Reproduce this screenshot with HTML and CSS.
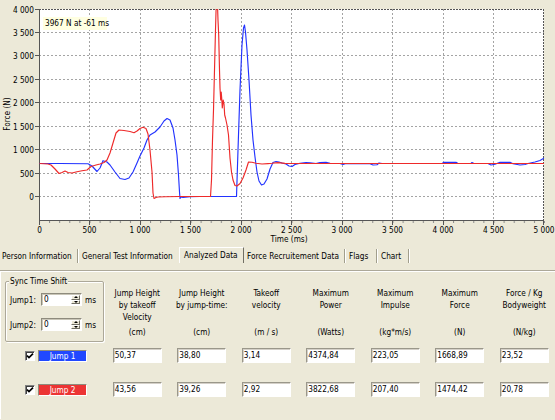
FILE: index.html
```html
<!DOCTYPE html>
<html>
<head>
<meta charset="utf-8">
<title>Jump analysis</title>
<link rel="stylesheet" href="styles.css">
</head>
<body>
<div class="app">
  <div class="chart">
    <svg class="chart-svg" width="555" height="246" viewBox="0 0 555 246">
      <defs>
        <clipPath id="plotclip"><rect x="39" y="9" width="505" height="211"/></clipPath>
        <pattern id="minor" x="39" y="0" width="10.1" height="246" patternUnits="userSpaceOnUse">
          <rect x="0" y="0" width="1" height="246" fill="#8a8a8a"/>
        </pattern>
      </defs>
      <rect class="plot-bg" x="39" y="9" width="505" height="211"/>
      <path class="grid" d="M89.5 9V220M140.5 9V220M190.5 9V220M241.5 9V220M291.5 9V220M342.5 9V220M392.5 9V220M443.5 9V220M493.5 9V220"/>
      <path class="grid" d="M39 32.5H544M39 55.5H544M39 79.5H544M39 102.5H544M39 126.5H544M39 149.5H544M39 173.5H544M39 196.5H544"/>
      <path class="frame" d="M39 9.5H544M543.5 9V220"/>
      <path class="axis" d="M39.5 9V221M39 220.5H544"/>
      <path class="axis" d="M35 9.5H39M35 32.5H39M35 55.5H39M35 79.5H39M35 102.5H39M35 126.5H39M35 149.5H39M35 173.5H39M35 196.5H39"/>
      <rect x="39" y="221" width="506" height="2" fill="url(#minor)"/>
      <path class="axis" d="M39.5 220V225M89.5 220V225M140.5 220V225M190.5 220V225M241.5 220V225M291.5 220V225M342.5 220V225M392.5 220V225M443.5 220V225M493.5 220V225M543.5 220V225"/>
      <g class="ylab">
        <text x="34" y="12.5">4 000</text>
        <text x="34" y="35.5">3 500</text>
        <text x="34" y="58.5">3 000</text>
        <text x="34" y="82.5">2 500</text>
        <text x="34" y="105.5">2 000</text>
        <text x="34" y="129.5">1 500</text>
        <text x="34" y="152.5">1 000</text>
        <text x="34" y="176.5">500</text>
        <text x="34" y="199.5">0</text>
      </g>
      <g class="xlab">
        <text x="39.5" y="232.5">0</text>
        <text x="89.5" y="232.5">500</text>
        <text x="140" y="232.5">1 000</text>
        <text x="190.5" y="232.5">1 500</text>
        <text x="241" y="232.5">2 000</text>
        <text x="291.5" y="232.5">2 500</text>
        <text x="342" y="232.5">3 000</text>
        <text x="392.5" y="232.5">3 500</text>
        <text x="443" y="232.5">4 000</text>
        <text x="493.5" y="232.5">4 500</text>
        <text x="544" y="232.5">5 000</text>
      </g>
      <text class="title-x" x="289" y="241.5">Time (ms)</text>
      <text class="title-y" transform="translate(10 114) rotate(-90)">Force (N)</text>
      <g clip-path="url(#plotclip)">
        <path class="blue" d="M39.5 163.5L60 163.5L88 163.8L92 166L97 171.5L100 168L103 160.7L107 162L110 165L115 172L120 178.5L125 179.5L129 178L133 172L137 163L140 156L144 148L147 140L150 135L155 132L160 127L164 121L167 118.5L170 120L173 128L175 140L177 155L178.5 175L179.5 192L180 198.5L181 197L183 197.5L190 196.8L200 196.5L236.5 196.5L238 150L240 90L242 45L243.5 28L244.5 25L245.5 32L247 50L249 80L251 115L253 140L255 157L257 172L259 181L261.5 185L264 184L267 179L270 169L273 162.5L276 161.5L279 162L282 163L286 164L289 166L292 166.5L295 164.5L300 163.3L306 162.5L310 162.7L316 163.5L320 162.6L326 162.3L330 163.4L340 163.5L343 164.5L346 163.5L370 163.7L373 165L377 164.8L379 163L382 163.5L442 163.5L444 162.3L456 162.3L458 163.5L471 163.5L472 162.5L474 163.5L488 163.5L491 165L495 164.2L500 162.3L510 162.3L513 163.7L520 165L525 164.5L528 163.5L535 162L540 160.5L545 157.5"/>
        <path class="red" d="M39.5 163.5L48 164L51 165L55 169L59 173.5L62 172.5L65 171L68 172.5L72 173L77 171.8L82 170.8L87 170L91 166.5L96 165L100 164L104 162.5L107 160L110 153L113 143L116 133L119 130L124 130.5L130 131.5L134 132.7L137 131L140 128.5L143 127.3L146 128.5L148 134L150 150L152 172L153 193L154 198.5L156 197.5L158 197L165 196.8L180 196.5L210.5 196.5L211.5 180L212.5 140L213.5 110L214.5 70L215.5 30L216.2 5L217.5 5L218 20L218.7 35L219.5 70L220 88L220.7 100L221.2 92L221.7 98L222.3 108L223.2 100L224 104L224.7 115L225.5 118L227 125L228.5 135L230 158L231.5 172L233 180L235 185.5L237 186L240 183.5L243 178L246 170L248.5 162L252 162.2L256 163.3L262 164L268 163.6L272 163.3L278 162.6L285 163.4L545 163.5"/>
      </g>
    </svg>
    <div class="tooltip">3967 N at -61 ms</div>
  </div>

  <div class="tabs">
    <div class="tab tab-first">Person Information</div>
    <div class="tab tab-general">General Test Information</div>
    <div class="tab tab-active">Analyzed Data</div>
    <div class="tab tab-force">Force Recruitement Data</div>
    <div class="tab tab-small">Flags</div>
    <div class="tab tab-small">Chart</div>
  </div>

  <div class="panel">
    <div class="group">
      <div class="legend">Sync Time Shift</div>
      <div class="spinrow">
        <span class="spinlabel">Jump1:</span>
        <div class="spin"><span class="spin-val">0</span><span class="spin-btns"><span class="spin-btn up"></span><span class="spin-btn down"></span></span></div>
        <span class="ms">ms</span>
      </div>
      <div class="spinrow second">
        <span class="spinlabel">Jump2:</span>
        <div class="spin"><span class="spin-val">0</span><span class="spin-btns"><span class="spin-btn up"></span><span class="spin-btn down"></span></span></div>
        <span class="ms">ms</span>
      </div>
    </div>

    <div class="head">Jump Height<br>by takeoff<br>Velocity</div>
    <div class="head">Jump Height<br>by jump-time:</div>
    <div class="head">Takeoff<br>velocity</div>
    <div class="head">Maximum<br>Power</div>
    <div class="head">Maximum<br>Impulse</div>
    <div class="head">Maximum<br>Force</div>
    <div class="head">Force / Kg<br>Bodyweight</div>

    <div class="unit">(cm)</div>
    <div class="unit">(cm)</div>
    <div class="unit">(m / s)</div>
    <div class="unit">(Watts)</div>
    <div class="unit">(kg*m/s)</div>
    <div class="unit">(N)</div>
    <div class="unit">(N/kg)</div>

    <div class="rowlabel">
      <span class="check"><svg width="8" height="8" viewBox="0 0 8 8"><polyline points="1,3.6 3,5.6 7,1.6" /></svg></span>
      <span class="jlabel jump1">Jump 1</span>
    </div>
    <div class="field">50,37</div>
    <div class="field">38,80</div>
    <div class="field">3,14</div>
    <div class="field">4374,84</div>
    <div class="field">223,05</div>
    <div class="field">1668,89</div>
    <div class="field">23,52</div>

    <div class="rowlabel">
      <span class="check"><svg width="8" height="8" viewBox="0 0 8 8"><polyline points="1,3.6 3,5.6 7,1.6" /></svg></span>
      <span class="jlabel jump2">Jump 2</span>
    </div>
    <div class="field">43,56</div>
    <div class="field">39,26</div>
    <div class="field">2,92</div>
    <div class="field">3822,68</div>
    <div class="field">207,40</div>
    <div class="field">1474,42</div>
    <div class="field">20,78</div>
  </div>
</div>
</body>
</html>
```

FILE: styles.css
```css
html, body {
  margin: 0;
  padding: 0;
}

body {
  width: 555px;
  height: 420px;
  overflow: hidden;
  background: #ece9d8;
  font-family: "DejaVu Sans Condensed", "Liberation Sans", Arial, sans-serif;
  font-size: 8.2px;
  color: #000;
}

.app {
  width: 555px;
  height: 420px;
}

/* ---------- chart ---------- */
.chart {
  position: relative;
  height: 246px;
}

.chart-svg {
  display: block;
}

.plot-bg {
  fill: #ffffff;
}

.grid {
  fill: none;
  stroke: #a4a4a4;
  stroke-width: 1;
  stroke-dasharray: 2 2;
}

.frame {
  fill: none;
  stroke: #555555;
  stroke-width: 1;
  stroke-dasharray: 2 1;
}

.axis {
  fill: none;
  stroke: #555555;
  stroke-width: 1;
}

.ylab text,
.xlab text,
.title-x,
.title-y {
  font-family: "DejaVu Sans Condensed", "Liberation Sans", Arial, sans-serif;
  font-size: 8.2px;
  fill: #000;
}

.ylab text {
  text-anchor: end;
}

.xlab text,
.title-x,
.title-y {
  text-anchor: middle;
}

.blue {
  fill: none;
  stroke: #2233ff;
  stroke-width: 1.15;
  stroke-linejoin: round;
}

.red {
  fill: none;
  stroke: #ee2a2a;
  stroke-width: 1.15;
  stroke-linejoin: round;
}

.tooltip {
  position: absolute;
  left: 43px;
  top: 17px;
  width: 64px;
  height: 13px;
  box-sizing: border-box;
  padding-left: 2px;
  line-height: 13px;
  background: #ffffe1;
  white-space: nowrap;
}

/* ---------- tabs ---------- */
.tabs {
  display: flex;
  align-items: flex-end;
  height: 17px;
}

.tab {
  box-sizing: border-box;
  height: 14px;
  line-height: 14px;
  padding-left: 3px;
  border-right: 1px solid #a19e8c;
  margin-right: 1px;
  box-shadow: 1px 0 0 #ffffff;
  white-space: nowrap;
  overflow: hidden;
}

.tab-first {
  width: 78px;
  padding-left: 2px;
}

.tab-general {
  width: 100px;
  border-right: 0;
  margin-right: 0;
  box-shadow: none;
}

.tab-active {
  width: 65px;
  height: 16px;
  padding-left: 4px;
  border-top: 1px solid #ffffff;
  border-left: 1px solid #ffffff;
  border-right: 1px solid #716f64;
  margin-right: 0;
  box-shadow: none;
}

.tab-force {
  width: 101px;
}

.tab-small {
  width: 31px;
}

/* ---------- analysis panel ---------- */
.panel {
  margin-top: 7px;
  border-top: 1px solid #aca899;
  box-shadow: inset 0 1px 0 #ffffff, inset 1px 0 0 #ffffff;
  padding-top: 10px;
  height: 149px;
  box-sizing: border-box;
  display: grid;
  grid-template-columns: 105px repeat(7, 64.5px);
  grid-template-rows: 45px 12px 34px 34px;
}

.group {
  grid-column: 1;
  grid-row: 1 / 3;
  margin-left: 5px;
  width: 99px;
  height: 61px;
  box-sizing: border-box;
  border: 1px solid #aca899;
  border-radius: 2px;
  box-shadow: inset 1px 1px 0 #ffffff, 1px 1px 0 #ffffff;
  padding-left: 4px;
  display: flex;
  flex-direction: column;
  align-items: flex-start;
}

.legend {
  margin-top: -6px;
  margin-left: -1px;
  padding: 0 1px;
  line-height: 11px;
  background: #ece9d8;
}

.spinrow {
  display: flex;
  align-items: center;
  height: 13px;
  margin-top: 6px;
}

.spinrow.second {
  margin-top: 12px;
}

.spinlabel {
  width: 31px;
}

.spin {
  width: 41px;
  height: 13px;
  box-sizing: border-box;
  display: flex;
  background: #ffffff;
  border: 1px solid;
  border-color: #8e8b7d #ffffff #ffffff #8e8b7d;
  box-shadow: inset 1px 1px 0 #c9c6b8;
}

.spin-val {
  flex: 1;
  padding-left: 2px;
  line-height: 11px;
}

.spin-btns {
  width: 9px;
  display: flex;
  flex-direction: column;
  padding: 1px 1px 1px 0;
}

.spin-btn {
  flex: 1;
  display: flex;
  align-items: center;
  justify-content: center;
  background: #ece9d8;
  border: 1px solid;
  border-color: #ffffff #716f64 #716f64 #ffffff;
  box-sizing: border-box;
}

.spin-btn.up::before {
  content: "";
  border-left: 2px solid transparent;
  border-right: 2px solid transparent;
  border-bottom: 2px solid #000;
}

.spin-btn.down::before {
  content: "";
  border-left: 2px solid transparent;
  border-right: 2px solid transparent;
  border-top: 2px solid #000;
}

.ms {
  margin-left: 3px;
}

.head {
  padding-top: 6px;
  text-align: center;
  line-height: 12px;
  white-space: nowrap;
}

.unit {
  text-align: center;
  line-height: 12px;
  white-space: nowrap;
}

.rowlabel {
  display: flex;
  align-items: center;
  height: 15px;
  margin-top: 10px;
  padding-left: 25px;
  gap: 3px;
}

.check {
  width: 10px;
  height: 10px;
  box-sizing: border-box;
  background: #ffffff;
  border: 1px solid;
  border-color: #808080 #ffffff #ffffff #808080;
  box-shadow: inset 1px 1px 0 #404040;
  display: flex;
  align-items: center;
  justify-content: center;
}

.check svg {
  display: block;
}

.check polyline {
  fill: none;
  stroke: #000;
  stroke-width: 1.7;
}

.jlabel {
  width: 49px;
  height: 12px;
  box-sizing: border-box;
  border: 1px solid;
  border-color: #8e8b7d #ffffff #ffffff #8e8b7d;
  color: #ffffff;
  text-align: center;
  line-height: 10px;
}

.jump1 {
  background: #2148ff;
}

.jump2 {
  background: #ec3434;
}

.field {
  margin: 10px auto 0;
  width: 49px;
  height: 15px;
  box-sizing: border-box;
  background: #ffffff;
  border: 1px solid;
  border-color: #9a978a #ffffff #ffffff #9a978a;
  box-shadow: inset 1px 1px 0 #d4d0c8;
  padding-left: 1px;
  line-height: 13px;
  white-space: nowrap;
}
```
